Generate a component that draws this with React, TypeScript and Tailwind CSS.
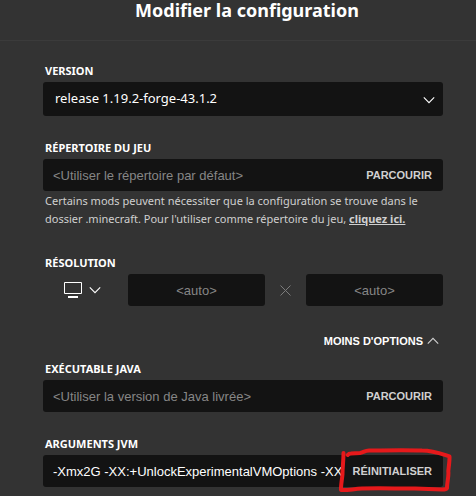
import { ReactNode, useState } from "react";

const labelClass =
  "block h-4 px-0.5 mb-[3px] text-[11px] leading-4 font-bold uppercase text-white";
const inputClass =
  "min-w-0 flex-1 h-8 font-['Liberation_Sans',sans-serif] text-[13px] text-white placeholder:text-[#868686] outline-none";

function Chevron({ className, up = false }: { className: string; up?: boolean }) {
  return (
    <svg
      className={className}
      width="12"
      height="8"
      viewBox="0 0 12 8"
      fill="none"
      stroke="currentColor"
      strokeWidth="1.1"
    >
      <path d={up ? "M0.8 6.6L6 1.4l5.2 5.2" : "M0.8 1.4L6 6.6l5.2-5.2"} />
    </svg>
  );
}

function TextField({
  id,
  label,
  action,
  placeholder,
  defaultValue,
  mark,
}: {
  id: string;
  label: string;
  action: string;
  placeholder?: string;
  defaultValue?: string;
  mark?: ReactNode;
}) {
  return (
    <div>
      <label htmlFor={id} className={labelClass}>
        {label}
      </label>
      <div className="relative flex rounded-[3px] bg-[#131313]">
        <input
          id={id}
          type="text"
          placeholder={placeholder}
          defaultValue={defaultValue}
          className={`${inputClass} ml-2.5 bg-transparent`}
        />
        <button
          type="button"
          className="h-8 pl-3 pr-[11px] font-['Liberation_Sans',sans-serif] text-[11px] font-bold uppercase text-[#d0d0d0]"
        >
          {action}
        </button>
        {mark}
      </div>
    </div>
  );
}

// Hand drawn frame around the reset button
function RedMark() {
  return (
    <svg
      className="absolute -top-2 -right-3 pointer-events-none"
      width="118"
      height="48"
      viewBox="0 0 118 48"
      fill="none"
      stroke="#e6191b"
      strokeWidth="4"
      strokeLinecap="round"
      strokeLinejoin="round"
    >
      <path d="M6.500 6C6.500 14 5.500 20 5.500 27C5 33 3.800 38 4 43C10 43.500 16 42 25 41.500C50 40.500 60 42 78 41.500L105 42.500C108 42.500 109.500 42 110 41C110 35 112 29 111.300 24C112 18 112.700 13 112.500 9.500C106 7.500 97 3.500 85 3.500C70 2.800 50 3.200 32 3.500C28 3.500 26 5.500 23 6L14 6.500C12.500 6.500 11.500 7 10.700 8" />
    </svg>
  );
}

export default function App() {
  const [open, setOpen] = useState(true);

  return (
    <div className="min-h-screen bg-[#333333] font-['Noto_Sans',sans-serif] text-white">
      <header className="border-b border-[#3b3b3b] pb-[19px] pl-[18px]">
        <h1 className="text-center text-lg leading-[21px] font-bold">
          Modifier la configuration
        </h1>
      </header>

      <form className="flex flex-col pt-[22px] pl-[43px] pr-[33px] pb-2">
        <label htmlFor="version" className={labelClass}>
          Version
        </label>
        <div className="relative mb-6">
          <select
            id="version"
            className="block w-full h-[34px] appearance-none rounded-[3px] bg-[#131313] px-3 text-[13px] text-white outline-none"
          >
            <option>release 1.19.2-forge-43.1.2</option>
          </select>
          <Chevron className="absolute right-2 top-3.5 pointer-events-none" />
        </div>

        <TextField
          id="game-dir"
          label="Répertoire du jeu"
          placeholder="<Utiliser le répertoire par défaut>"
          action="Parcourir"
        />
        <p className="mt-px mb-[27px] px-0.5 text-[11px] leading-[18px] text-[#d0d0d0]">
          Certains mods peuvent nécessiter que la configuration se trouve dans le
          dossier .minecraft. Pour l'utiliser comme répertoire du jeu,{" "}
          <a href="#" className="font-bold underline">
            cliquez ici.
          </a>
        </p>

        <label htmlFor="width" className={labelClass}>
          Résolution
        </label>
        <div className="flex items-center">
          <button
            type="button"
            aria-label="Choisir une résolution"
            className="flex h-8 w-[85px] shrink-0 items-center gap-[7px] pl-[21px]"
          >
            <svg width="18" height="16" viewBox="0 0 18 16" fill="none">
              <path d="M0.500 0.500h17v11h-17z" stroke="#fff" />
              <path d="M4 14h10v2H4z" fill="#fff" />
            </svg>
            <Chevron className="text-white" />
          </button>
          <input
            id="width"
            type="text"
            placeholder="<auto>"
            className={`${inputClass} rounded-[3px] bg-[#131313] text-center`}
          />
          <svg
            className="mx-[15px] shrink-0"
            width="11"
            height="11"
            viewBox="0 0 11 11"
            stroke="#7c7c7c"
          >
            <path d="M0.500 0.500l10 10M10.500 0.500l-10 10" />
          </svg>
          <input
            type="text"
            aria-label="Hauteur"
            placeholder="<auto>"
            className={`${inputClass} rounded-[3px] bg-[#131313] text-center`}
          />
        </div>

        <button
          type="button"
          onClick={() => setOpen(!open)}
          className="mt-[27px] mb-3 flex h-4 items-center gap-1 self-end pr-1 font-['Liberation_Sans',sans-serif] text-[11px] font-bold uppercase"
        >
          Moins d'options
          <Chevron up={open} className="text-[#d0d0d0]" />
        </button>

        {open && (
          <div className="flex flex-col gap-6">
            <TextField
              id="java"
              label="Exécutable Java"
              placeholder="<Utiliser la version de Java livrée>"
              action="Parcourir"
            />
            <TextField
              id="jvm"
              label="Arguments JVM"
              defaultValue="-Xmx2G -XX:+UnlockExperimentalVMOptions -XX:+UseG1GC -XX:G1NewSizePercent=20"
              action="Réinitialiser"
              mark={<RedMark />}
            />
          </div>
        )}
      </form>
    </div>
  );
}
